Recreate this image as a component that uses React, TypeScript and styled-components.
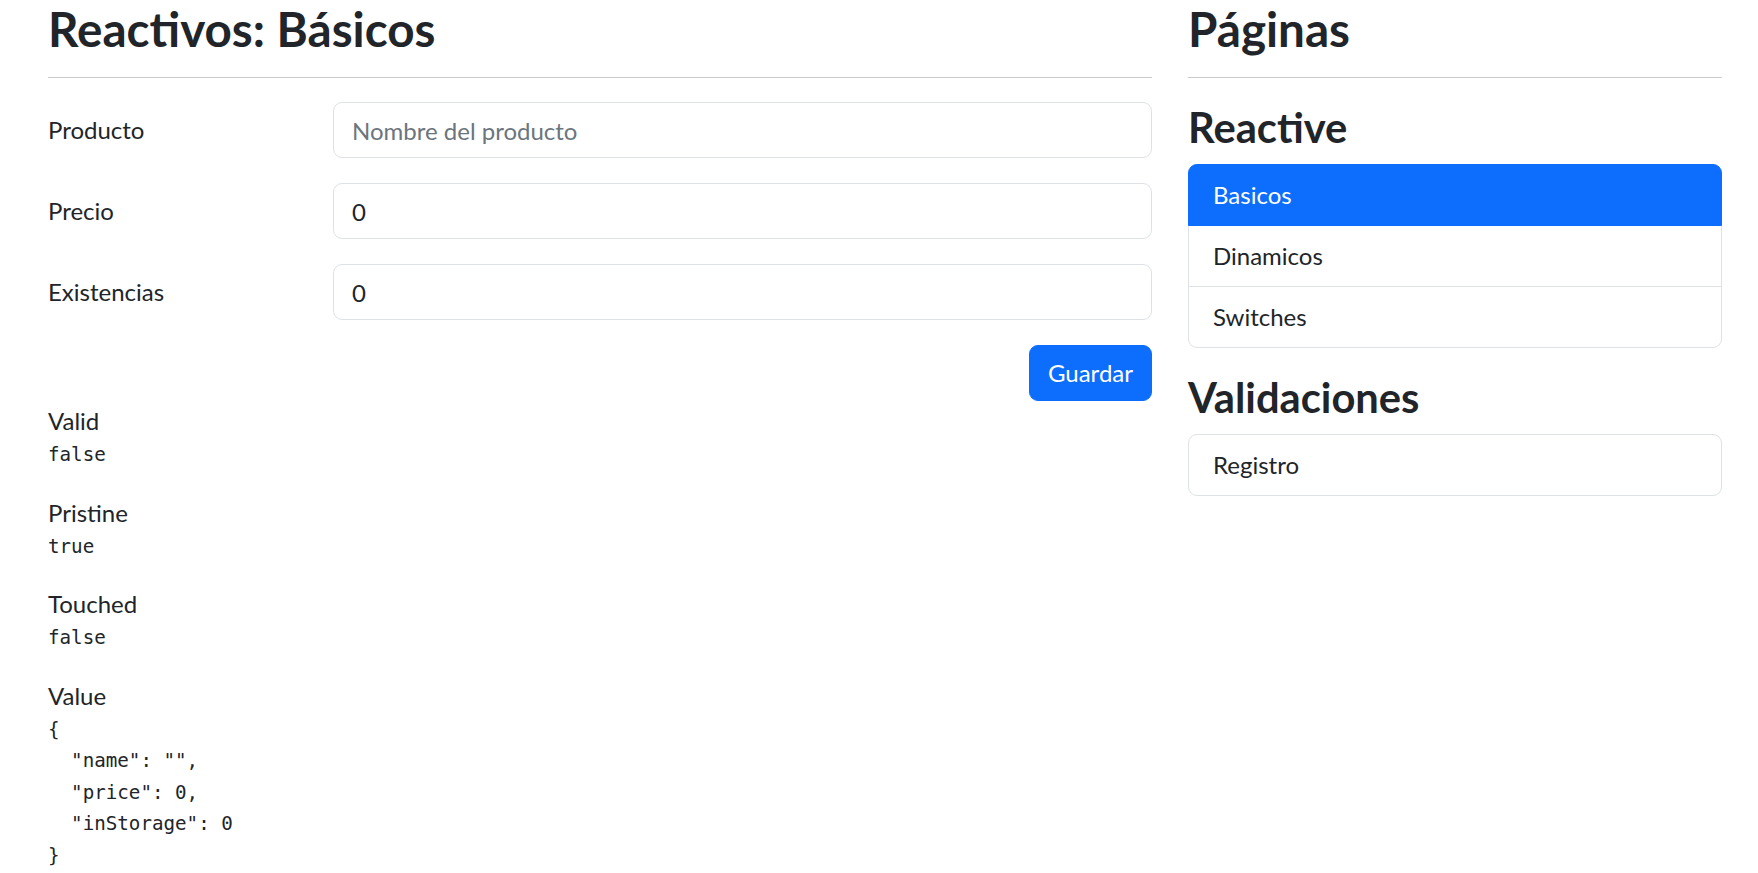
import React from "react";
import styled, { createGlobalStyle, css } from "styled-components";

const GlobalStyle = createGlobalStyle`
  *, *::before, *::after { box-sizing: border-box; }
  html, body { margin: 0; padding: 0; background: #ffffff; }
  body {
    font-family: Lato, "Noto Sans", "Liberation Sans", sans-serif;
    font-size: 24px;
    line-height: 36px;
    color: #212529;
  }
`;

const Page = styled.div`
  display: grid;
  grid-template-columns: 2fr 1fr;
  padding: 0 18px 0 30px;
`;

const Column = styled.section`
  padding: 0 18px;
  min-width: 0;
`;

const PageTitle = styled.h2`
  margin: 0 0 20px;
  font-size: 47.6px;
  line-height: 57px;
  font-weight: 700;
  color: #212529;
`;

const Divider = styled.hr`
  margin: 0 0 24px;
  border: 0;
  height: 1px;
  background: #c8c9ca;
`;

const FormRow = styled.div`
  display: grid;
  grid-template-columns: calc(25% - 27px) 1fr;
  column-gap: 36px;
  align-items: center;
  margin-bottom: 25px;
`;

const Label = styled.label`
  font-size: 24px;
  line-height: 36px;
`;

const Input = styled.input`
  width: 100%;
  height: 56px;
  padding: 0 18px;
  border: 1px solid #dee2e6;
  border-radius: 9px;
  font: inherit;
  font-size: 24px;
  color: #212529;
  background: #ffffff;
  outline: none;
  &::placeholder { color: #6c757d; opacity: 1; }
`;

const ActionRow = styled.div`
  display: flex;
  justify-content: flex-end;
`;

const PrimaryButton = styled.button`
  height: 56px;
  padding: 0 18px;
  border: 1px solid #0d6efd;
  border-radius: 9px;
  background: #0d6efd;
  color: #ffffff;
  font: inherit;
  font-size: 24px;
  line-height: 36px;
  cursor: pointer;
`;

const StatusList = styled.div`
  margin-top: 2px;
`;

const StatusLabel = styled.span`
  display: block;
  font-size: 24px;
  line-height: 36px;
`;

const Code = styled.pre`
  margin: 0 0 24px;
  font-family: "DejaVu Sans Mono", "Liberation Mono", monospace;
  font-size: 19.2px;
  line-height: 31.5px;
  color: #212529;
  white-space: pre;
`;

const SectionTitle = styled.h3`
  margin: 0 0 12px;
  font-size: 41.7px;
  line-height: 50px;
  font-weight: 700;
  color: #212529;
`;

const ListGroup = styled.div`
  display: flex;
  flex-direction: column;
  margin-bottom: 24px;
`;

const ListItem = styled.a<{ $active?: boolean }>`
  display: block;
  padding: 12px 24px;
  font-size: 24px;
  line-height: 36px;
  color: #212529;
  text-decoration: none;
  background: #ffffff;
  border: 1px solid #dee2e6;
  cursor: pointer;
  & + & { border-top-width: 0; }
  &:first-child { border-top-left-radius: 9px; border-top-right-radius: 9px; }
  &:last-child { border-bottom-left-radius: 9px; border-bottom-right-radius: 9px; }
  ${(p) =>
    p.$active &&
    css`
      background: #0d6efd;
      border-color: #0d6efd;
      color: #ffffff;
    `}
`;

const fields = [
  { label: "Producto", placeholder: "Nombre del producto", value: "" },
  { label: "Precio", placeholder: "", value: "0" },
  { label: "Existencias", placeholder: "", value: "0" },
];

const statuses = [
  { label: "Valid", value: "false" },
  { label: "Pristine", value: "true" },
  { label: "Touched", value: "false" },
  {
    label: "Value",
    value: '{\n  "name": "",\n  "price": 0,\n  "inStorage": 0\n}',
  },
];

export default function App() {
  return (
    <>
      <GlobalStyle />
      <Page>
        <Column>
          <PageTitle>Reactivos: Básicos</PageTitle>
          <Divider />
          <form onSubmit={(e) => e.preventDefault()}>
            {fields.map((f) => (
              <FormRow key={f.label}>
                <Label>{f.label}</Label>
                <Input
                  type="text"
                  placeholder={f.placeholder}
                  defaultValue={f.value}
                />
              </FormRow>
            ))}
            <ActionRow>
              <PrimaryButton type="submit">Guardar</PrimaryButton>
            </ActionRow>
          </form>
          <StatusList>
            {statuses.map((s) => (
              <div key={s.label}>
                <StatusLabel>{s.label}</StatusLabel>
                <Code>{s.value}</Code>
              </div>
            ))}
          </StatusList>
        </Column>
        <Column>
          <PageTitle>Páginas</PageTitle>
          <Divider />
          <SectionTitle>Reactive</SectionTitle>
          <ListGroup>
            <ListItem $active>Basicos</ListItem>
            <ListItem>Dinamicos</ListItem>
            <ListItem>Switches</ListItem>
          </ListGroup>
          <SectionTitle>Validaciones</SectionTitle>
          <ListGroup>
            <ListItem>Registro</ListItem>
          </ListGroup>
        </Column>
      </Page>
    </>
  );
}
